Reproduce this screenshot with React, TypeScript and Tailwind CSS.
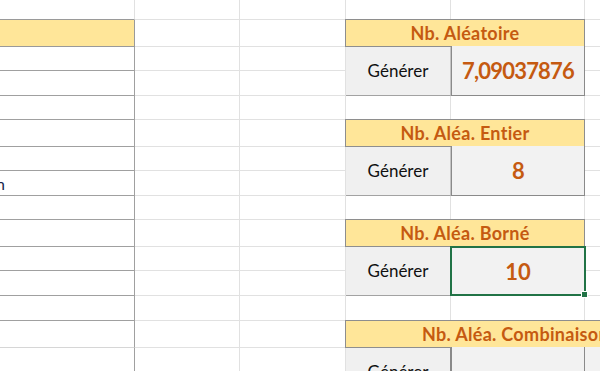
const ROW_START = [
  'row-start-1', 'row-start-2', 'row-start-3', 'row-start-4',
  'row-start-5', 'row-start-6', 'row-start-7', 'row-start-8',
  'row-start-9', 'row-start-10', 'row-start-11', 'row-start-12',
  'row-start-13', 'row-start-14', 'row-start-15', 'row-start-16',
]
const COL_START = ['col-start-1', 'col-start-2', 'col-start-3', 'col-start-4', 'col-start-5', 'col-start-6']

// classes for the plain sheet cells (gridlines + the bordered table on the left)
function cellClass(r: number, c: number) {
  if (c === 0) {
    if (r === 0) return 'border-r border-b border-r-[#e1e1e1] border-b-[#9a9a9a] bg-white'
    if (r === 1) return 'border-r border-b border-[#9a9a9a] bg-[#ffe699]'
    if (r === 13) return 'border-r border-b border-r-[#a0a0a0] border-b-[#d6d6d6] bg-white'
    return 'border-r border-b border-[#a0a0a0] bg-white'
  }
  return 'border-r border-b border-[#e1e1e1] bg-white'
}

const blocks = [
  { title: 'Nb. Aléatoire', value: '7,09037876', head: 'row-start-2', body: 'row-start-3' },
  { title: 'Nb. Aléa. Entier', value: '8', head: 'row-start-6', body: 'row-start-7' },
  { title: 'Nb. Aléa. Borné', value: '10', head: 'row-start-10', body: 'row-start-11', selected: true },
]

export default function App() {
  const cells = []
  for (let r = 0; r < 16; r++) {
    for (let c = 0; c < 6; c++) {
      cells.push(
        <div key={`${r}-${c}`} className={`${ROW_START[r]} ${COL_START[c]} ${cellClass(r, c)} overflow-hidden`}>
          {r === 7 && c === 0 && (
            <span className="-ml-[4px] block pt-[3px] text-[16px] leading-[20px] text-[#17264a]">n</span>
          )}
        </div>
      )
    }
  }

  return (
    <div className="h-[371px] w-[600px] overflow-hidden bg-white font-['Lato',sans-serif]">
      <div className="grid grid-cols-[135px_105px_106px_105px_134px_120px] grid-rows-[20px_27px_24px_25px_24px_27px_24px_25px_24px_27px_24px_25px_25px_27px_24px_24px]">
        {cells}

        {blocks.map((b) => (
          <div key={b.title} className="contents">
            <div className={`${b.head} col-start-4 col-span-2 -mt-px -ml-px flex items-center justify-center border border-[#8e8e8e] bg-[#ffe699] text-[18px] font-bold tracking-[0.3px] text-[#c55a11]`}>
              {b.title}
            </div>
            <div className={`${b.body} col-start-4 row-span-2 flex items-center justify-center border-r border-b border-r-[#c4c4c4] border-b-[#a2a2a2] bg-[#f0f0f0] text-[17px] text-[#111]`}>
              Générer
            </div>
            {b.selected ? (
              <div className={`${b.body} relative col-start-5 row-span-2 -mt-px -ml-px -mr-px flex items-center justify-center border-2 border-[#217346] bg-[#f2f2f2] text-[22px] font-bold text-[#c55a11]`}>
                {b.value}
                <span className="absolute -right-[4px] -bottom-[4px] h-[7px] w-[7px] border border-white bg-[#217346]" />
              </div>
            ) : (
              <div className={`${b.body} col-start-5 row-span-2 -mt-px flex items-center justify-center border-x border-b border-[#8a8a8a] bg-[#f2f2f2] text-[22px] font-bold tracking-[-0.8px] text-[#c55a11]`}>
                {b.value}
              </div>
            )}
          </div>
        ))}

        {/* last block, cut by the window */}
        <div className="col-start-4 col-span-3 row-start-14 -mt-px -ml-px flex items-center whitespace-nowrap border border-[#8e8e8e] bg-[#ffe699] pl-[76px] text-[18px] font-bold tracking-[0.3px] text-[#c55a11]">
          Nb. Aléa. Combinaison
        </div>
        <div className="col-start-4 row-start-15 row-span-2 flex items-center justify-center border-r border-b border-r-[#8a8a8a] border-b-[#a2a2a2] bg-[#f0f0f0] text-[17px] text-[#111]">
          Générer
        </div>
        <div className="col-start-5 row-start-15 row-span-2 -mt-px border-x border-b border-[#8a8a8a] bg-[#f2f2f2]" />
        <div className="col-start-6 row-start-15 row-span-2 -mt-px border-b border-[#8a8a8a] bg-[#f2f2f2]" />
      </div>
    </div>
  )
}
